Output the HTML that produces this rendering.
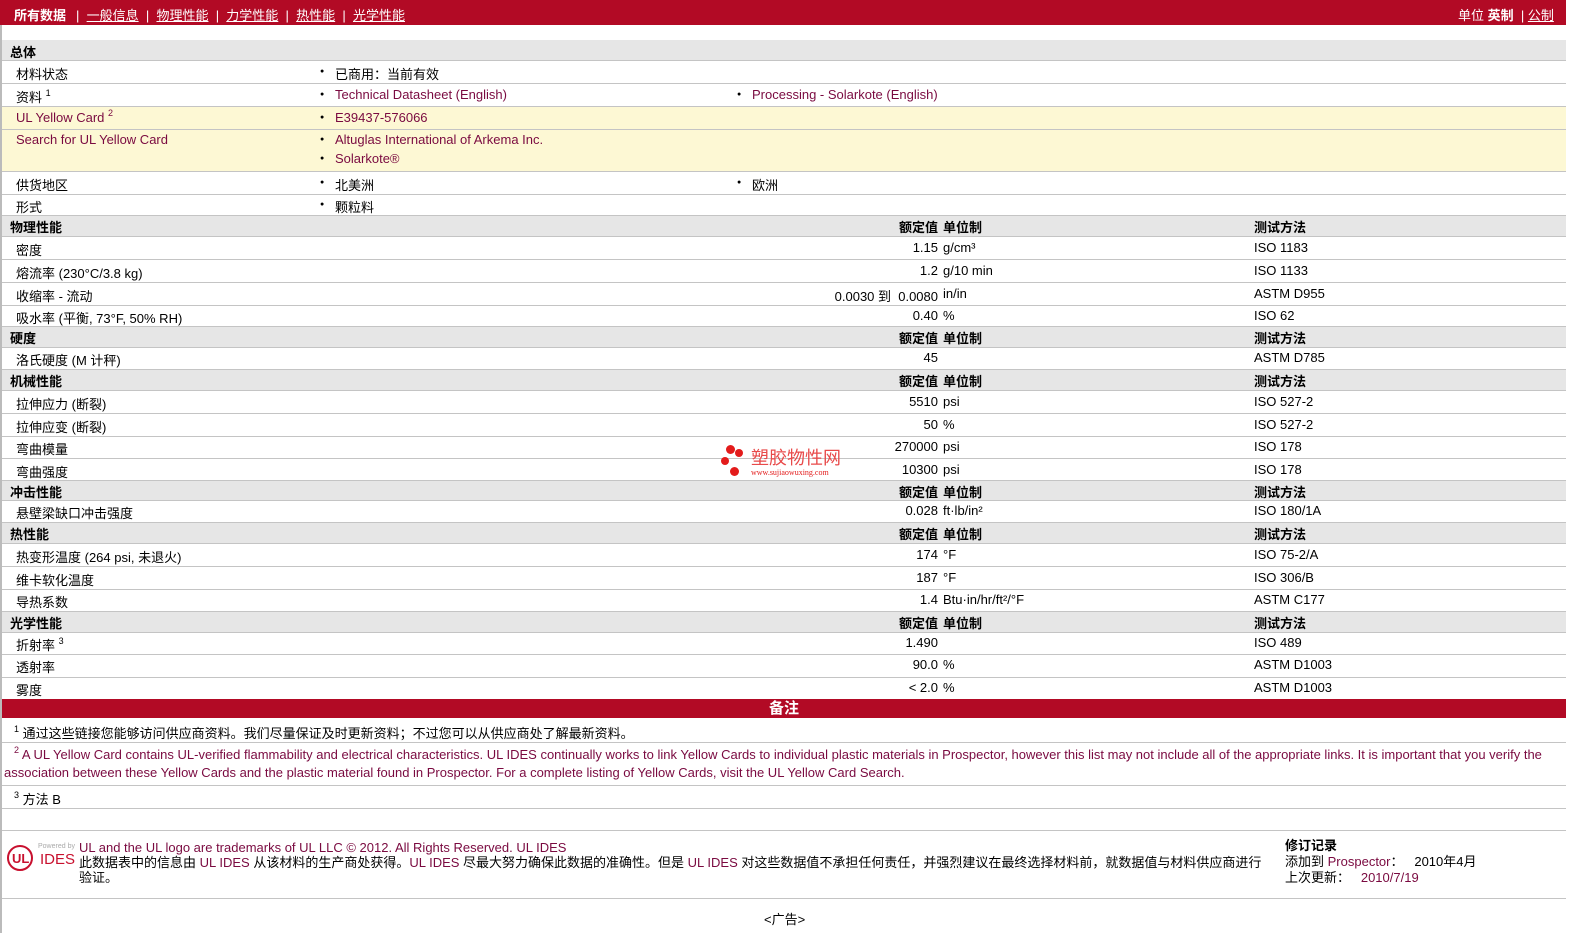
<!DOCTYPE html>
<html><head><meta charset="utf-8"><style>
body{margin:0;width:1584px;height:933px;background:#fff;font-family:"Liberation Sans","Noto Sans CJK SC",sans-serif;font-size:13px;color:#000;position:relative;overflow:hidden}
.top{position:absolute;left:0;top:0;width:1566px;height:25px;background:#b20a25;color:#fff}
.top span{position:absolute;top:5px;font-size:13px}
.top u{color:#fff}
.r{position:absolute;left:2px;width:1564px;border-bottom:1px solid #c4c4c4;background:#fff}
.g{background:#e6e6e6;font-weight:bold}
.y{background:#fdf8d4}
.r span{position:absolute;white-space:nowrap}
.l{left:14px}.h{left:8px}
.b{left:318px}.b2{left:735px}
.b::before,.b2::before{content:"●";position:absolute;left:0;color:#000;font-size:7px;top:4px}
.bt{padding-left:15px}
.v{right:628px;text-align:right}
.u{left:941px}
.m{left:1252px}
.a{color:#7a0a40}
sup{font-size:9px;vertical-align:6px;line-height:0}
</style></head><body>
<div style="position:absolute;left:0;top:0;width:2px;height:933px;background:#bbb"></div>
<div class="top">
<span style="left:14px;font-weight:bold">所有数据</span>
<span style="left:76px">|&nbsp; <u>一般信息</u> &nbsp;| &nbsp;<u>物理性能</u> &nbsp;| &nbsp;<u>力学性能</u> &nbsp;| &nbsp;<u>热性能</u> &nbsp;| &nbsp;<u>光学性能</u></span>
<span style="left:1458px">单位 <b>英制</b> &nbsp;| <u>公制</u></span>
</div>

<div class="r g" style="top:40px;height:20px"><span class="h" style="top:2px">总体</span></div>
<div class="r" style="top:61px;height:22px"><span class="l" style="top:3px">材料状态</span><span class="b bt" style="top:3px">已商用：当前有效</span></div>
<div class="r" style="top:84px;height:22px"><span class="l" style="top:3px">资料 <sup>1</sup></span><span class="b bt a" style="top:3px">Technical Datasheet (English)</span><span class="b2 bt a" style="top:3px">Processing - Solarkote (English)</span></div>
<div class="r y" style="top:107px;height:22px"><span class="l a" style="top:3px">UL Yellow Card <sup>2</sup></span><span class="b bt a" style="top:3px">E39437-576066</span></div>
<div class="r y" style="top:130px;height:41px"><span class="l a" style="top:2px">Search for UL Yellow Card</span><span class="b bt a" style="top:2px">Altuglas International of Arkema Inc.</span><span class="b bt a" style="top:21px">Solarkote®</span></div>
<div class="r" style="top:172px;height:22px"><span class="l" style="top:3px">供货地区</span><span class="b bt" style="top:3px">北美洲</span><span class="b2 bt" style="top:3px">欧洲</span></div>
<div class="r" style="top:195px;height:20px"><span class="l" style="top:2px">形式</span><span class="b bt" style="top:2px">颗粒料</span></div>

<div class="r g" style="top:216px;height:20px"><span class="h" style="top:1px">物理性能</span><span class="v" style="top:1px">额定值</span><span class="u" style="top:1px">单位制</span><span class="m" style="top:1px">测试方法</span></div>
<div class="r" style="top:237px;height:22px"><span class="l" style="top:3px">密度</span><span class="v" style="top:3px">1.15</span><span class="u" style="top:3px">g/cm³</span><span class="m" style="top:3px">ISO 1183</span></div>
<div class="r" style="top:260px;height:22px"><span class="l" style="top:3px">熔流率 (230°C/3.8 kg)</span><span class="v" style="top:3px">1.2</span><span class="u" style="top:3px">g/10 min</span><span class="m" style="top:3px">ISO 1133</span></div>
<div class="r" style="top:283px;height:22px"><span class="l" style="top:3px">收缩率 - 流动</span><span class="v" style="top:3px">0.0030 到&nbsp; 0.0080</span><span class="u" style="top:3px">in/in</span><span class="m" style="top:3px">ASTM D955</span></div>
<div class="r" style="top:306px;height:20px"><span class="l" style="top:2px">吸水率 (平衡, 73°F, 50% RH)</span><span class="v" style="top:2px">0.40</span><span class="u" style="top:2px">%</span><span class="m" style="top:2px">ISO 62</span></div>

<div class="r g" style="top:327px;height:20px"><span class="h" style="top:1px">硬度</span><span class="v" style="top:1px">额定值</span><span class="u" style="top:1px">单位制</span><span class="m" style="top:1px">测试方法</span></div>
<div class="r" style="top:348px;height:21px"><span class="l" style="top:2px">洛氏硬度 (M 计秤)</span><span class="v" style="top:2px">45</span><span class="m" style="top:2px">ASTM D785</span></div>

<div class="r g" style="top:370px;height:20px"><span class="h" style="top:1px">机械性能</span><span class="v" style="top:1px">额定值</span><span class="u" style="top:1px">单位制</span><span class="m" style="top:1px">测试方法</span></div>
<div class="r" style="top:391px;height:22px"><span class="l" style="top:3px">拉伸应力 (断裂)</span><span class="v" style="top:3px">5510</span><span class="u" style="top:3px">psi</span><span class="m" style="top:3px">ISO 527-2</span></div>
<div class="r" style="top:414px;height:22px"><span class="l" style="top:3px">拉伸应变 (断裂)</span><span class="v" style="top:3px">50</span><span class="u" style="top:3px">%</span><span class="m" style="top:3px">ISO 527-2</span></div>
<div class="r" style="top:437px;height:21px"><span class="l" style="top:2px">弯曲模量</span><span class="v" style="top:2px">270000</span><span class="u" style="top:2px">psi</span><span class="m" style="top:2px">ISO 178</span></div>
<div class="r" style="top:459px;height:21px"><span class="l" style="top:3px">弯曲强度</span><span class="v" style="top:3px">10300</span><span class="u" style="top:3px">psi</span><span class="m" style="top:3px">ISO 178</span></div>

<div class="r g" style="top:481px;height:19px"><span class="h" style="top:1px">冲击性能</span><span class="v" style="top:1px">额定值</span><span class="u" style="top:1px">单位制</span><span class="m" style="top:1px">测试方法</span></div>
<div class="r" style="top:501px;height:21px"><span class="l" style="top:2px">悬壁梁缺口冲击强度</span><span class="v" style="top:2px">0.028</span><span class="u" style="top:2px">ft·lb/in²</span><span class="m" style="top:2px">ISO 180/1A</span></div>

<div class="r g" style="top:523px;height:20px"><span class="h" style="top:1px">热性能</span><span class="v" style="top:1px">额定值</span><span class="u" style="top:1px">单位制</span><span class="m" style="top:1px">测试方法</span></div>
<div class="r" style="top:544px;height:22px"><span class="l" style="top:3px">热变形温度 (264 psi, 未退火)</span><span class="v" style="top:3px">174</span><span class="u" style="top:3px">°F</span><span class="m" style="top:3px">ISO 75-2/A</span></div>
<div class="r" style="top:567px;height:22px"><span class="l" style="top:3px">维卡软化温度</span><span class="v" style="top:3px">187</span><span class="u" style="top:3px">°F</span><span class="m" style="top:3px">ISO 306/B</span></div>
<div class="r" style="top:590px;height:21px"><span class="l" style="top:2px">导热系数</span><span class="v" style="top:2px">1.4</span><span class="u" style="top:2px">Btu·in/hr/ft²/°F</span><span class="m" style="top:2px">ASTM C177</span></div>

<div class="r g" style="top:612px;height:20px"><span class="h" style="top:1px">光学性能</span><span class="v" style="top:1px">额定值</span><span class="u" style="top:1px">单位制</span><span class="m" style="top:1px">测试方法</span></div>
<div class="r" style="top:633px;height:21px"><span class="l" style="top:2px">折射率 <sup>3</sup></span><span class="v" style="top:2px">1.490</span><span class="m" style="top:2px">ISO 489</span></div>
<div class="r" style="top:655px;height:22px"><span class="l" style="top:2px">透射率</span><span class="v" style="top:2px">90.0</span><span class="u" style="top:2px">%</span><span class="m" style="top:2px">ASTM D1003</span></div>
<div class="r" style="top:678px;height:21px;border:none"><span class="l" style="top:2px">雾度</span><span class="v" style="top:2px">&lt; 2.0</span><span class="u" style="top:2px">%</span><span class="m" style="top:2px">ASTM D1003</span></div>

<div style="position:absolute;left:2px;top:699px;width:1564px;height:19px;background:#b20a25;color:#fff;font-weight:bold;font-size:15px;text-align:center;line-height:19px">备注</div>
<div class="r" style="top:719px;height:23px"><span class="l" style="top:4px;left:12px"><sup>1</sup> 通过这些链接您能够访问供应商资料。我们尽量保证及时更新资料；不过您可以从供应商处了解最新资料。</span></div>
<div class="r a" style="top:743px;height:42px"><div style="position:absolute;left:2px;top:3px;width:1560px;line-height:18px;text-indent:10px"><sup>2</sup> A UL Yellow Card contains UL-verified flammability and electrical characteristics. UL IDES continually works to link Yellow Cards to individual plastic materials in Prospector, however this list may not include all of the appropriate links. It is important that you verify the association between these Yellow Cards and the plastic material found in Prospector. For a complete listing of Yellow Cards, visit the UL Yellow Card Search.</div></div>
<div class="r" style="top:786px;height:22px"><span class="l" style="top:3px;left:12px"><sup>3</sup> 方法 B</span></div>
<div class="r" style="top:809px;height:21px"></div>
<div class="r" style="top:831px;height:67px">
<svg style="position:absolute;left:4px;top:10px" width="70" height="32"><circle cx="14" cy="17" r="12" fill="none" stroke="#c8102e" stroke-width="2"/><text x="6" y="22" font-size="13" font-weight="bold" fill="#c8102e" font-family="Liberation Sans">UL</text><text x="32" y="7" font-size="7" fill="#aaa" font-family="Liberation Sans">Powered by</text><text x="34" y="23" font-size="15" fill="#c8102e" font-family="Liberation Sans">IDES</text></svg>
<div style="position:absolute;left:77px;top:9px;width:1185px;line-height:15px"><span class="a" style="position:static">UL and the UL logo are trademarks of UL LLC © 2012. All Rights Reserved. UL IDES</span><br>此数据表中的信息由 <span class="a" style="position:static">UL IDES</span> 从该材料的生产商处获得。<span class="a" style="position:static">UL IDES</span> 尽最大努力确保此数据的准确性。但是 <span class="a" style="position:static">UL IDES</span> 对这些数据值不承担任何责任，并强烈建议在最终选择材料前，就数据值与材料供应商进行验证。</div>
<div style="position:absolute;left:1283px;top:7px;line-height:16px"><b>修订记录</b><br>添加到 <span class="a" style="position:static">Prospector</span>： &nbsp; 2010年4月<br>上次更新： &nbsp; <span class="a" style="position:static">2010/7/19</span></div>
</div>
<div style="position:absolute;left:764px;top:909px">&lt;广告&gt;</div>

<div style="position:absolute;left:720px;top:445px;width:140px;height:35px">
<div style="position:absolute;left:6px;top:0px;width:9px;height:9px;border-radius:50%;background:#e31b1b"></div>
<div style="position:absolute;left:15px;top:4px;width:8px;height:8px;border-radius:50%;background:#e31b1b"></div>
<div style="position:absolute;left:1px;top:12px;width:8px;height:8px;border-radius:50%;background:#e31b1b"></div>
<div style="position:absolute;left:10px;top:22px;width:9px;height:9px;border-radius:50%;background:#e31b1b"></div>
<div style="position:absolute;left:31px;top:3px;font-size:18px;color:#e84a4a;line-height:20px">塑胶物性网</div>
<div style="position:absolute;left:31px;top:23px;font-size:8px;color:#e31b1b;font-family:'Liberation Serif',serif">www.sujiaowuxing.com</div>
</div>
</body></html>
